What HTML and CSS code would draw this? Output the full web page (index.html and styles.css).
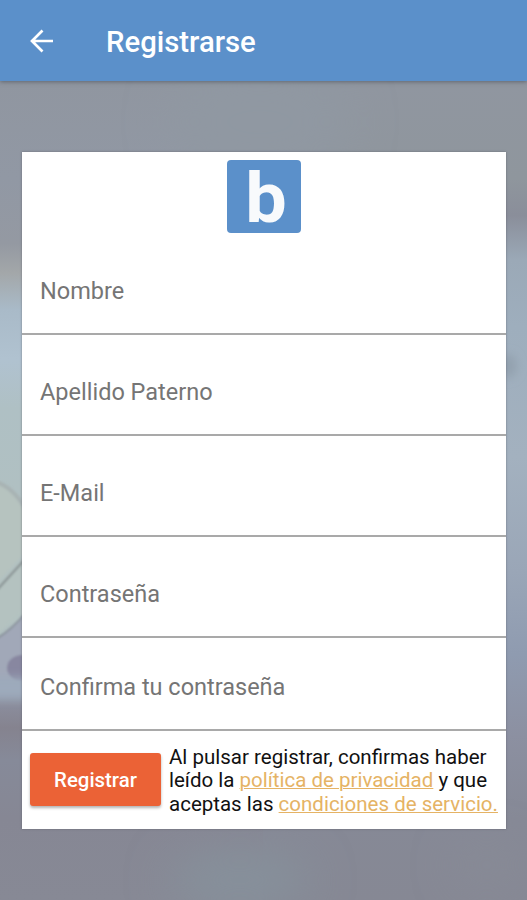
FILE: index.html
```
<!DOCTYPE html>
<html lang="es">
<head>
    <meta charset="UTF-8">
    <meta name="viewport" content="width=device-width, initial-scale=1.0">
    <title>Registrarse</title>
    <link rel="stylesheet" href="styles.css">
</head>
<body>
    <svg class="backdrop" viewBox="0 0 527 820" preserveAspectRatio="none" aria-hidden="true">
        <defs>
            <linearGradient id="left-tone" x1="0" y1="0" x2="0" y2="1">
                <stop offset="0" stop-color="#9096a0"/>
                <stop offset="0.12" stop-color="#9198a4"/>
                <stop offset="0.2" stop-color="#9499a2"/>
                <stop offset="0.235" stop-color="#a3a7a9"/>
                <stop offset="0.28" stop-color="#a9bac8"/>
                <stop offset="0.34" stop-color="#b0c2d0"/>
                <stop offset="0.4" stop-color="#afc0c4"/>
                <stop offset="0.5" stop-color="#b0c0c2"/>
                <stop offset="0.66" stop-color="#b3c2c1"/>
                <stop offset="0.74" stop-color="#98a5b5"/>
                <stop offset="0.765" stop-color="#8a8c9b"/>
                <stop offset="0.79" stop-color="#85838f"/>
                <stop offset="0.83" stop-color="#868a99"/>
                <stop offset="0.9" stop-color="#868794"/>
                <stop offset="1" stop-color="#878995"/>
            </linearGradient>
            <linearGradient id="right-tone" x1="0" y1="0" x2="0" y2="1">
                <stop offset="0" stop-color="#9096a0"/>
                <stop offset="0.12" stop-color="#8f969d"/>
                <stop offset="0.165" stop-color="#8a8e9a"/>
                <stop offset="0.22" stop-color="#9ba9b7"/>
                <stop offset="0.3" stop-color="#9eaebd"/>
                <stop offset="0.46" stop-color="#a3b1bf"/>
                <stop offset="0.6" stop-color="#9aa6b7"/>
                <stop offset="0.7" stop-color="#8f9bb0"/>
                <stop offset="0.8" stop-color="#8c90a1"/>
                <stop offset="0.9" stop-color="#868996"/>
                <stop offset="1" stop-color="#868894"/>
            </linearGradient>
            <filter id="soft" x="-50%" y="-50%" width="200%" height="200%">
                <feGaussianBlur stdDeviation="1.2"/>
            </filter>
            <filter id="haze" x="-50%" y="-50%" width="200%" height="200%">
                <feGaussianBlur stdDeviation="5"/>
            </filter>
            <filter id="cloud" x="-50%" y="-100%" width="200%" height="300%">
                <feGaussianBlur stdDeviation="22"/>
            </filter>
        </defs>
        <rect width="264" height="820" fill="url(#left-tone)"/>
        <rect x="263" width="264" height="820" fill="url(#right-tone)"/>
        <g filter="url(#cloud)">
            <ellipse cx="240" cy="800" rx="70" ry="28" fill="#86919b"/>
            <ellipse cx="487" cy="785" rx="30" ry="18" fill="#888b96"/>
            <ellipse cx="260" cy="42" rx="90" ry="60" fill="#9098a2"/>
        </g>
        <g filter="url(#soft)">
            <path d="M-4 402 Q14 408 26 430 L26 472 L-4 504Z" fill="#b6c3bf"/>
            <path d="M-4 402 Q14 408 26 430" fill="none" stroke="#a8b3b4" stroke-width="4"/>
            <path d="M-4 508 L28 472 V526 L-4 556Z" fill="#b4c2c0"/>
            <path d="M-4 511 L28 476" fill="none" stroke="#8b9596" stroke-width="2.5"/>
            <path d="M-4 559 Q12 550 28 530 V600 H-4Z" fill="#a1a8b8"/>
            <path d="M-4 559 Q12 550 28 530" fill="none" stroke="#8a939c" stroke-width="2"/>
            <ellipse cx="22" cy="588" rx="15" ry="13" fill="#8887a0"/>
        </g>
        <g filter="url(#haze)">
            <rect x="-12" y="598" width="44" height="20" fill="#9daabc"/>
            <ellipse cx="508" cy="286" rx="9" ry="12" fill="#93a1af"/>
        </g>
    </svg>

    <header class="header">
        <a class="back" href="#" aria-label="Volver">
            <svg width="26" height="26" viewBox="0 0 26 26">
                <path d="M25 13H4M14.5 2.5L4 13L14.5 23.5" fill="none" stroke="#fff" stroke-width="2.7"/>
            </svg>
        </a>
        <h1>Registrarse</h1>
    </header>

    <main>
        <form class="card">
            <div class="logo"><span>b</span></div>
            <div class="field first">Nombre</div>
            <div class="field">Apellido Paterno</div>
            <div class="field">E-Mail</div>
            <div class="field">Contraseña</div>
            <div class="field confirm">Confirma tu contraseña</div>
            <div class="actions">
                <button type="button">Registrar</button>
                <p>Al pulsar registrar, confirmas haber<br>
                leído la <a href="#">política de privacidad</a> y que<br>
                aceptas las <a href="#">condiciones de servicio.</a></p>
            </div>
        </form>
    </main>
</body>
</html>
```

FILE: styles.css
```
* {
    box-sizing: border-box;
}
body {
    font-family: Roboto, sans-serif;
    margin: 0;
    height: 900px;
    overflow: hidden;
    background-color: #878995;
}
/* blurred photo behind the form */
.backdrop {
    position: absolute;
    top: 80px;
    left: 0;
    width: 527px;
    height: 820px;
    z-index: -1;
}
.header {
    height: 81px;
    background-color: #5b90ca;
    box-shadow: 0 1px 4px rgba(50, 55, 65, 0.5);
    display: flex;
    align-items: center;
    padding-left: 28px;
}
.back {
    display: flex;
    width: 78px;
}
.header h1 {
    margin: 3px 0 0;
    font-size: 29.3px;
    font-weight: 500;
    line-height: 34px;
    color: #fff;
}
.card {
    width: 484px;
    height: 677px;
    margin: 71px 0 0 22px;
    background-color: #fff;
    box-shadow: 0 0 2px rgba(80, 80, 90, 0.6);
    display: flex;
    flex-direction: column;
}
.logo {
    width: 74px;
    height: 73px;
    margin: 8px 0 0 205px;
    padding-left: 3px;
    border-radius: 4px;
    background-color: #5b90ca;
    color: #f8fafc;
    text-align: center;
    font-size: 71px;
    font-weight: 700;
    line-height: 75px;
}
.logo span {
    display: inline-block;
    transform: scaleX(1.04);
}
.field {
    height: 101px;
    padding: 43px 18px 0;
    border-bottom: 2px solid #a9a9a9;
    font-size: 23.5px;
    line-height: 28px;
    color: #757575;
}
.field.first {
    height: 102px;
    padding-top: 44px;
}
.field.confirm {
    height: 93px;
    padding-top: 35px;
}
.actions {
    display: flex;
    align-items: flex-start;
    padding: 15px 0 0 8px;
}
button {
    width: 131px;
    height: 53px;
    margin: 7px 8px 0 0;
    padding: 0;
    border: none;
    border-radius: 3px;
    background-color: #eb6236;
    box-shadow: 0 2px 3px rgba(0, 0, 0, 0.3);
    color: #fff;
    font-family: inherit;
    font-size: 20.4px;
    font-weight: 500;
    cursor: pointer;
}
.actions p {
    margin: 0;
    font-size: 20.5px;
    line-height: 23.4px;
    color: #111;
    white-space: nowrap;
}
.actions a {
    color: #e5b365;
    text-decoration-thickness: 1px;
}
```
